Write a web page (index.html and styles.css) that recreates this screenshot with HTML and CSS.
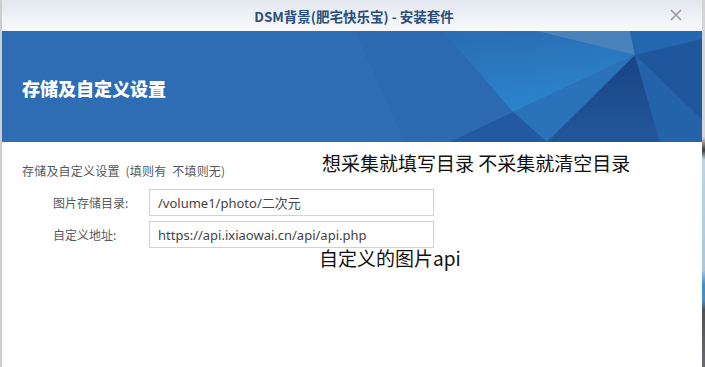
FILE: index.html
```html
<!DOCTYPE html>
<html lang="zh-CN">
<head>
<meta charset="utf-8">
<title>DSM背景(肥宅快乐宝) - 安装套件</title>
<link rel="stylesheet" href="styles.css">
</head>
<body>
<div class="desktop">
  <div class="window">
    <div class="titlebar">
      <span class="title">DSM背景(肥宅快乐宝) - 安装套件</span>
      <svg class="close" width="12" height="12" viewBox="0 0 12 12"><path d="M1 1 L11 11 M11 1 L1 11" stroke="#9a9a9a" stroke-width="1.6" fill="none"/></svg>
    </div>
    <div class="banner">
      <svg class="banner-art" viewBox="0 0 700 111" preserveAspectRatio="none">
        <defs>
          <linearGradient id="mid" x1="0" y1="0" x2="0.3" y2="1">
            <stop offset="0" stop-color="#2a6cb3"/>
            <stop offset="1" stop-color="#2a84cc"/>
          </linearGradient>
          <linearGradient id="dark" x1="0" y1="0" x2="0" y2="1">
            <stop offset="0" stop-color="#1a4486"/>
            <stop offset="1" stop-color="#22569b"/>
          </linearGradient>
        </defs>
        <rect x="0" y="0" width="700" height="111" fill="#2e6cb3"/>
        <polygon points="353,0 441,0 511,81 448,111 403,111" fill="#2c69b0"/>
        <polygon points="441,0 535,0 633,24 511,81" fill="url(#mid)"/>
        <polygon points="535,0 628,0 633,24" fill="#4a82bb"/>
        <polygon points="628,0 700,0 700,8 633,24" fill="#2267b0"/>
        <polygon points="633,24 700,8 700,89" fill="#1f579d"/>
        <polygon points="511,81 633,24 545,111" fill="#2a72b9"/>
        <polygon points="633,24 545,111 658,111" fill="url(#dark)"/>
        <polygon points="633,24 658,111 700,111 700,89" fill="#2462a9"/>
        <polygon points="511,81 448,111 545,111" fill="#2359a2"/>
      </svg>
      <h1 class="heading">存储及自定义设置</h1>
    </div>
    <div class="content">
      <p class="subtitle">存储及自定义设置 (填则有 不填则无)</p>
      <div class="form">
        <label class="label">图片存储目录:</label>
        <div class="field">/volume1/photo/二次元</div>
        <label class="label">自定义地址:</label>
        <div class="field">https://api.ixiaowai.cn/api/api.php</div>
      </div>
      <div class="note note-1">想采集就填写目录 不采集就清空目录</div>
      <div class="note note-2">自定义的图片api</div>
    </div>
  </div>
  <div class="edge"></div>
</div>
</body>
</html>
```
FILE: styles.css
```css
html, body {
  margin: 0;
  padding: 0;
  background: #ffffff;
}
.desktop {
  display: flex;
  width: 705px;
  height: 367px;
  overflow: hidden;
}
.window {
  width: 700px;
  border-left: 2px solid #cdcdcd;
  display: flex;
  flex-direction: column;
  background: #ffffff;
  font-family: "Noto Sans", "Noto Sans CJK SC", sans-serif;
}
.edge {
  width: 3px;
  background: linear-gradient(to bottom, #d4d4d4 0, #d4d4d4 137px, #3a3a3a 150px, #bcd5e6 160px, #a9c8de 270px, #3c8fc8 285px, #4b8fc4 300px, #505058 310px, #6a6a70 367px);
}
.titlebar {
  height: 31px;
  display: flex;
  align-items: center;
  justify-content: center;
  position: relative;
  background: linear-gradient(to bottom, #e3e8ef, #f8f9fb);
}
.title {
  font-family: "Noto Sans CJK SC", sans-serif;
  font-weight: bold;
  font-size: 13.5px;
  color: #2a4d7b;
  margin-left: 4px;
}
.close {
  position: absolute;
  right: 20px;
  top: 9px;
}
.banner {
  height: 111px;
  position: relative;
  display: flex;
  align-items: center;
  overflow: hidden;
}
.banner-art {
  position: absolute;
  left: 0;
  top: 0;
  width: 100%;
  height: 100%;
}
.heading {
  position: relative;
  margin: 0 0 0 20px;
  padding-top: 2px;
  font-family: "Noto Sans CJK SC", sans-serif;
  font-weight: 900;
  font-size: 18px;
  color: #ffffff;
}
.content {
  position: relative;
  flex: 1;
  padding: 21px 0 0 20px;
}
.subtitle {
  margin: 0;
  font-family: "Noto Sans CJK SC", sans-serif;
  font-size: 12px;
  line-height: 16px;
  word-spacing: 3px;
  letter-spacing: 0.2px;
  color: #555a60;
}
.form {
  display: grid;
  grid-template-columns: 96px 285px;
  row-gap: 5px;
  margin: 10px 0 0 31px;
  align-items: center;
}
.label {
  font-family: "Noto Sans CJK SC", sans-serif;
  font-size: 12px;
  color: #555a60;
}
.field {
  height: 25px;
  border: 1px solid #c6d3e0;
  padding: 0 8px;
  display: flex;
  align-items: center;
  font-family: "Noto Sans", "Noto Sans CJK SC", sans-serif;
  font-size: 13px;
  color: #444;
}
.note {
  position: absolute;
  font-family: "Noto Sans CJK SC", sans-serif;
  font-size: 19px;
  color: #111;
  white-space: nowrap;
  line-height: 24px;
}
.note-1 {
  left: 320px;
  top: 9px;
}
.note-2 {
  left: 317px;
  top: 104px;
}
```
